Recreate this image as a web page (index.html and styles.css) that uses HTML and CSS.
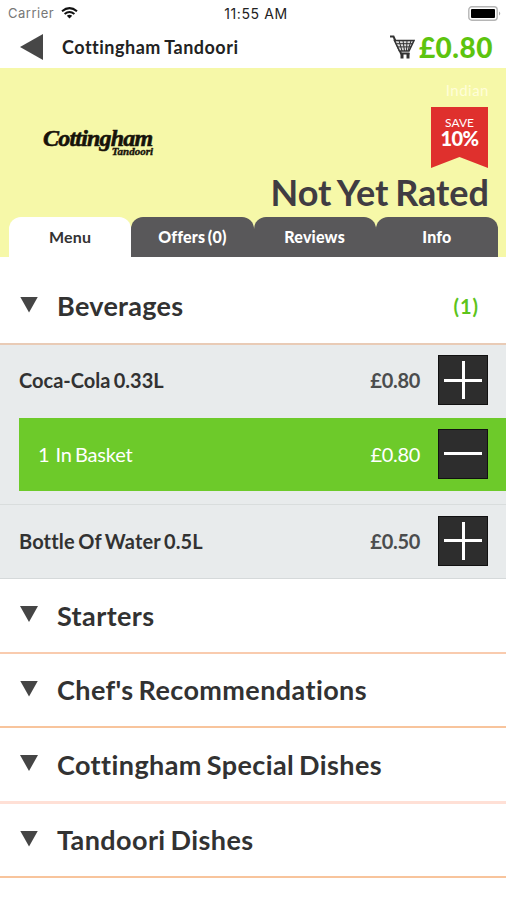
FILE: index.html
```html
<!DOCTYPE html>
<html lang="en">
<head>
<meta charset="utf-8">
<title>Cottingham Tandoori</title>
<link rel="stylesheet" href="styles.css">
</head>
<body>
<div class="status">
  <div class="carrier"><span>Carrier</span>
    <svg class="wifi" width="17" height="12" viewBox="0 0 17 12"><path d="M1 4.300Q8.500-2 16 4.300M3.600 7Q8.500 3 13.400 7" fill="none" stroke="#111" stroke-width="2"/><path d="M5.800 8.800Q8.500 6.700 11.200 8.800L8.500 11.500Z" fill="#111"/></svg>
  </div>
  <div class="time">11:55 AM</div>
  <svg class="battery" width="34" height="15" viewBox="0 0 34 15"><rect x=".8" y=".8" width="28.400" height="13.400" rx="3" fill="#fff" stroke="#b5b5b5" stroke-width="1.400"/><rect x="3" y="3" width="24" height="9" rx="1" fill="#000"/><path d="M31 5.500q2.500 2 0 4z" fill="#aaa"/></svg>
</div>
<header class="nav">
  <svg class="back" width="23" height="26" viewBox="0 0 23 26"><path d="M0 13L23 0V26Z" fill="#474747"/></svg>
  <h1>Cottingham Tandoori</h1>
  <svg class="cart" width="25" height="24" viewBox="0 0 25 24" fill="none" stroke="#333"><path d="M0 1.500H3.500L11 18.500H19.500" stroke-width="2"/><path d="M4.500 5.500H24L19 16H9.500Z" fill="#ddd" stroke-width="1.600"/><path d="M6.500 8.700H22.500M7.800 11.900H21M9 5.500L12 16M13 5.500L14.500 16M17 5.500L16.500 16M21 5.500L18 16" stroke-width="1"/><path d="M12 18v5.500M18 18v5.500" stroke-width="3"/></svg>
  <span class="total">£0.80</span>
</header>
<section class="hero">
  <div class="brand"><span class="brand-main">Cottingham</span><span class="brand-sub">Tandoori</span></div>
  <div class="summary">
    <span class="cuisine">Indian</span>
    <div class="ribbon"><span>SAVE</span><b>10%</b></div>
    <span class="rating">Not Yet Rated</span>
  </div>
  <nav class="tabs">
    <span class="tab active">Menu</span><span class="tab">Offers (0)</span><span class="tab">Reviews</span><span class="tab">Info</span>
  </nav>
</section>
<main>
  <div class="category first"><i class="arrow"></i><h2>Beverages</h2><span class="count">(1)</span></div>
  <div class="items">
    <div class="item"><span class="name">Coca-Cola 0.33L</span><span class="price">£0.80</span><span class="btn plus"></span></div>
    <div class="item basket"><span class="name"><span class="qty">1</span>In Basket</span><span class="price">£0.80</span><span class="btn"></span></div>
    <div class="item last"><span class="name">Bottle Of Water 0.5L</span><span class="price">£0.50</span><span class="btn plus"></span></div>
  </div>
  <div class="category"><i class="arrow"></i><h2>Starters</h2></div>
  <div class="category thin"><i class="arrow"></i><h2>Chef's Recommendations</h2></div>
  <div class="category pale"><i class="arrow"></i><h2>Cottingham Special Dishes</h2></div>
  <div class="category thin"><i class="arrow"></i><h2>Tandoori Dishes</h2></div>
</main>
</body>
</html>
```
FILE: styles.css
```css
* { box-sizing: border-box; }
body { margin: 0; width: 506px; height: 900px; overflow: hidden; background: #fff; color: #323232; font-family: Lato, sans-serif; font-variant-ligatures: none; }
h1, h2 { margin: 0; font-weight: 700; white-space: nowrap; }
svg { display: block; flex: none; }

.status { height: 26px; display: grid; grid-template-columns: 1fr auto 1fr; align-items: center; padding: 0 4px 0 8px; font-family: Inter, sans-serif; font-size: 13px; }
.carrier { display: flex; align-items: center; gap: 7px; color: #777; letter-spacing: .5px; }
.time { margin-left: 2px; color: #222; font-size: 14px; font-weight: 400; letter-spacing: .6px; }
.battery { justify-self: end; }

.nav { height: 42px; display: flex; align-items: center; padding: 0 13px 0 20px; }
.nav h1 { margin-left: 19px; font-size: 18px; letter-spacing: .5px; word-spacing: -1px; color: #222; flex: 1; }
.total { margin-left: 4px; font-size: 28px; font-weight: 900; line-height: 40px; letter-spacing: .5px; color: #5dc40f; }

.hero { height: 189px; display: grid; grid-template-columns: 1fr auto; grid-template-rows: 149px 40px; background: #f6f8a8; }
.brand { width: 110px; margin: 58px 0 0 43px; display: flex; flex-direction: column; color: #17130a; font-family: "Liberation Serif", serif; font-style: italic; font-weight: 700; }
.brand-main { font-size: 24px; line-height: 24px; letter-spacing: -.8px; -webkit-text-stroke: .6px #17130a; }
.brand-sub { align-self: flex-end; margin-top: -4px; font-size: 11px; line-height: 11px; -webkit-text-stroke: .4px #17130a; }
.summary { display: flex; flex-direction: column; align-items: flex-end; padding: 12px 17px 0 0; }
.cuisine { font-size: 15px; line-height: 20px; letter-spacing: .5px; color: #fffed8; }
.ribbon { width: 57px; height: 61px; margin: 7px 1px 0 0; padding-top: 8px; display: flex; flex-direction: column; align-items: center; color: #fff; background: #df302d; clip-path: polygon(0 0, 100% 0, 100% 100%, 50% 82%, 0 100%); }
.ribbon span { font-size: 12px; line-height: 15px; }
.ribbon b { font-size: 20px; line-height: 16px; font-weight: 900; letter-spacing: -.5px; }
.rating { margin-top: 2px; font-size: 36px; line-height: 44px; font-weight: 700; word-spacing: -2px; color: #403c42; white-space: nowrap; }
.tabs { grid-column: 1 / 3; display: flex; padding: 0 8px 0 9px; }
.tab { flex: 1; padding-bottom: 1px; border-radius: 12px 12px 0 0; display: flex; align-items: center; justify-content: center; background: #59585a; color: #fff; font-size: 16px; font-weight: 900; letter-spacing: .2px; word-spacing: -1.5px; }
.tab.active { background: #fff; color: #333; font-weight: 700; }

.category { height: 75px; display: flex; align-items: center; padding: 0 27px 0 20px; border-bottom: 2px solid #f9cbae; }
.category.first { height: 88px; padding-top: 12px; border-color: #e9cbb6; }
.category.thin { height: 74px; border-color: #f8c49c; }
.category.pale { height: 76px; border-bottom: 3px solid #ffe0d6; }
.category h2 { margin-left: 19px; font-size: 27px; line-height: 32px; letter-spacing: .4px; word-spacing: -2px; flex: 1; }
.category.first h2 { letter-spacing: .3px; }
.arrow { width: 18px; height: 16px; margin-top: -3px; background: #454545; clip-path: polygon(0 0, 100% 0, 50% 100%); }
.count { font-size: 20px; font-weight: 700; color: #5dc41b; letter-spacing: 1px; }

.items { background: #e8ebec; border-bottom: 1px solid #d5d9da; }
.item { height: 73px; display: flex; align-items: center; padding: 0 18px 3px 19px; font-size: 20px; font-weight: 700; }
.item .name { flex: 1; word-spacing: -1.5px; }
.item .price { color: #4b4d4e; margin-right: 18px; letter-spacing: -.3px; }
.basket { margin: 0 0 13px 19px; padding-bottom: 2px; background: #6dca2a; color: #fff; font-weight: 400; }
.basket .name { letter-spacing: -.2px; }
.basket .price { color: #fff; }
.basket .qty { margin-right: 6px; }
.item.last { height: 74px; padding-bottom: 2px; border-top: 1px solid #d9dddd; }
.last .name { letter-spacing: .15px; }
.btn { width: 50px; height: 50px; background: linear-gradient(#fff, #fff) center / 38px 3px no-repeat, #2d2d2d; border: 1px solid #111; }
.btn.plus { background: linear-gradient(#fff, #fff) center / 38px 3px no-repeat, linear-gradient(#fff, #fff) center / 3px 38px no-repeat, #2d2d2d; }
```
